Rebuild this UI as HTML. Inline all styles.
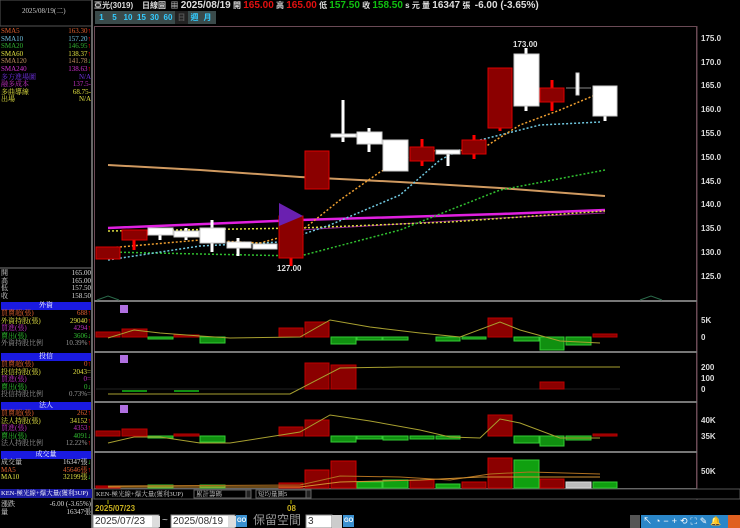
<!DOCTYPE html>
<html><head><meta charset="utf-8"><style>
*{margin:0;padding:0;box-sizing:border-box}
body{width:740px;height:528px;background:#000;overflow:hidden;font-family:"Liberation Sans","Noto Sans CJK TC",sans-serif;position:relative;color:#ddd}
.a{position:absolute;white-space:nowrap}
.s{font-size:7px;line-height:7.6px;font-family:"Liberation Serif","Noto Serif CJK SC",serif}
</style></head><body>
<svg width="740" height="528" style="position:absolute;left:0;top:0" font-family="Liberation Sans, Noto Sans CJK TC, sans-serif">
<!-- left panel borders -->
<rect x="0" y="0" width="92" height="26" fill="#000" stroke="#555"/>
<line x1="92" y1="0" x2="92" y2="528" stroke="#666" stroke-width="2"/>
<line x1="0" y1="268" x2="92" y2="268" stroke="#777"/>
<!-- chart frame -->
<rect x="94.5" y="26.5" width="602" height="462" fill="none" stroke="#6a4a55"/>
<line x1="697" y1="26" x2="697" y2="500" stroke="#6a4a55"/>
<g stroke="#777" stroke-width="2">
<line x1="94" y1="301" x2="697" y2="301"/><line x1="94" y1="352" x2="697" y2="352"/>
<line x1="94" y1="402" x2="697" y2="402"/><line x1="94" y1="452" x2="697" y2="452"/>
<line x1="94" y1="489" x2="697" y2="489"/>
</g>
<line x1="94" y1="499" x2="740" y2="499" stroke="#555"/>
<!-- price axis -->
<g fill="#ddd" font-size="8" font-weight="bold">
<text x="701" y="41">175.0</text><text x="701" y="65">170.0</text><text x="701" y="88">165.0</text><text x="701" y="112">160.0</text><text x="701" y="136">155.0</text><text x="701" y="160">150.0</text><text x="701" y="184">145.0</text><text x="701" y="207">140.0</text><text x="701" y="231">135.0</text><text x="701" y="255">130.0</text><text x="701" y="279">125.0</text>
<text x="701" y="323">5K</text><text x="701" y="340">0</text>
<text x="701" y="370">200</text><text x="701" y="381">100</text><text x="701" y="392">0</text>
<text x="701" y="423">40K</text><text x="701" y="439">35K</text>
<text x="701" y="474">50K</text><text x="701" y="498">10</text>
</g>
<!-- MA lines -->
<polyline points="108,165 200,170 300,177 400,182 500,188 605,196" fill="none" stroke="#d09a60" stroke-width="2"/>
<polyline points="108,228 300,220 500,214 605,210" fill="none" stroke="#e020e0" stroke-width="2.5"/>
<polyline points="300,230 500,218 605,213" fill="none" stroke="#902090" stroke-width="1"/>
<polyline points="108,231 300,228 450,222 605,211" fill="none" stroke="#e0e040" stroke-width="1.5" stroke-dasharray="2,2"/>
<polyline points="108,252 200,254 300,256 400,230 500,190 605,170" fill="none" stroke="#30c030" stroke-width="1.5" stroke-dasharray="2,2"/>
<polyline points="108,260 200,246 280,242 330,225 400,195 440,160 480,140 540,125 600,122" fill="none" stroke="#70c8e0" stroke-width="1.5" stroke-dasharray="2,2"/>
<polyline points="108,248 200,240 260,243 300,232 340,200 380,172 420,151 480,150 520,125 560,110 600,93" fill="none" stroke="#f0a030" stroke-width="1.5" stroke-dasharray="2,2"/>
<!-- candles -->
<g fill="#8b0000" stroke="#d00" stroke-width="1">
<rect x="96" y="247" width="24" height="12"/>
<line x1="134" y1="240" x2="134" y2="250" stroke="#f00" stroke-width="3"/><rect x="122" y="230" width="25" height="10"/>
<line x1="291" y1="258" x2="291" y2="266" stroke="#f00" stroke-width="3"/><rect x="279" y="216" width="24" height="42"/>
<rect x="305" y="151" width="24" height="38"/>
<line x1="422" y1="139" x2="422" y2="166" stroke="#f00" stroke-width="3"/><rect x="410" y="147" width="24" height="14"/>
<line x1="474" y1="135" x2="474" y2="159" stroke="#f00" stroke-width="3"/><rect x="462" y="140" width="24" height="14"/>
<line x1="500" y1="128" x2="500" y2="131" stroke="#f00" stroke-width="3"/><rect x="488" y="68" width="24" height="60"/>
<line x1="552" y1="80" x2="552" y2="111" stroke="#f00" stroke-width="3"/><rect x="540" y="88" width="24" height="14"/>
</g>
<polygon points="279,203 303,216 279,226" fill="#6a20b0"/>
<g fill="#fff" stroke="#ccc">
<line x1="160" y1="235" x2="160" y2="240" stroke="#fff" stroke-width="3"/><rect x="148" y="228" width="25" height="7"/>
<line x1="186" y1="228" x2="186" y2="240" stroke="#fff" stroke-width="3"/><rect x="174" y="231" width="25" height="6"/>
<line x1="212" y1="220" x2="212" y2="252" stroke="#fff" stroke-width="3"/><rect x="200" y="228" width="25" height="15"/>
<line x1="238" y1="238" x2="238" y2="256" stroke="#fff" stroke-width="3"/><rect x="227" y="242" width="24" height="6"/>
<rect x="253" y="244" width="24" height="5"/>
<line x1="343" y1="100" x2="343" y2="142" stroke="#fff" stroke-width="3"/><rect x="331" y="134" width="25" height="3"/>
<line x1="369" y1="128" x2="369" y2="152" stroke="#fff" stroke-width="3"/><rect x="357" y="132" width="25" height="12"/>
<rect x="383" y="140" width="25" height="31"/>
<line x1="448" y1="150" x2="448" y2="166" stroke="#fff" stroke-width="3"/><rect x="436" y="150" width="24" height="4"/>
<line x1="526" y1="48" x2="526" y2="111" stroke="#fff" stroke-width="3"/><rect x="514" y="54" width="25" height="52"/>
<line x1="566" y1="88" x2="591" y2="88" stroke="#888"/><rect x="576" y="73" width="3" height="22"/>
<line x1="605" y1="116" x2="605" y2="121" stroke="#fff" stroke-width="3"/><rect x="593" y="86" width="24" height="30"/>
</g>
<text x="277" y="271" fill="#ddd" font-size="8" font-weight="bold">127.00</text>
<text x="513" y="47" fill="#ddd" font-size="8" font-weight="bold">173.00</text>
<path d="M97,300 L108,296 L119,300 M640,300 L651,296 L662,300" fill="none" stroke="#2a6a4a"/>
<!-- 外資 -->
<g stroke-width="1">
<g fill="#8b0000" stroke="#b00"><rect x="96" y="332" width="24" height="5"/><rect x="122" y="329" width="25" height="8"/><rect x="174" y="335" width="25" height="2"/><rect x="279" y="328" width="24" height="9"/><rect x="305" y="322" width="24" height="15"/><rect x="488" y="318" width="24" height="19"/><rect x="593" y="334" width="24" height="3"/></g>
<g fill="#109010" stroke="#3c3"><rect x="148" y="337" width="25" height="2"/><rect x="200" y="337" width="25" height="6"/><rect x="331" y="337" width="25" height="7"/><rect x="357" y="337" width="25" height="3"/><rect x="383" y="337" width="25" height="3"/><rect x="436" y="337" width="24" height="4"/><rect x="462" y="337" width="24" height="2"/><rect x="514" y="337" width="25" height="4"/><rect x="540" y="337" width="24" height="13"/><rect x="566" y="337" width="25" height="8"/></g>
</g>
<polyline points="108,338 134,330 160,333 200,336 230,338 300,337 330,320 370,327 420,333 460,337 500,322 520,330 560,341 600,343" fill="none" stroke="#a8a030"/>
<!-- 投信 -->
<line x1="96" y1="389" x2="620" y2="389" stroke="#222"/>
<g fill="#109010"><rect x="122" y="390" width="25" height="2"/><rect x="174" y="390" width="25" height="2"/></g>
<g fill="#8b0000" stroke="#b00"><rect x="305" y="363" width="24" height="26"/><rect x="331" y="365" width="25" height="24"/><rect x="540" y="382" width="24" height="7"/></g>
<polyline points="108,394 290,394 340,368 400,367 620,367" fill="none" stroke="#a8a030"/>
<!-- 法人 -->
<g fill="#8b0000" stroke="#b00"><rect x="96" y="431" width="24" height="5"/><rect x="122" y="429" width="25" height="7"/><rect x="174" y="434" width="25" height="2"/><rect x="279" y="427" width="24" height="9"/><rect x="305" y="420" width="24" height="16"/><rect x="488" y="415" width="24" height="21"/><rect x="593" y="434" width="24" height="2"/></g>
<g fill="#109010" stroke="#3c3"><rect x="148" y="436" width="25" height="2"/><rect x="200" y="436" width="25" height="6"/><rect x="331" y="436" width="25" height="6"/><rect x="357" y="436" width="25" height="3"/><rect x="383" y="436" width="25" height="4"/><rect x="410" y="436" width="24" height="3"/><rect x="436" y="436" width="24" height="3"/><rect x="514" y="436" width="25" height="7"/><rect x="540" y="436" width="24" height="10"/><rect x="566" y="436" width="25" height="4"/></g>
<polyline points="108,443 134,437 160,437 200,443 230,443 300,432 330,415 370,421 420,430 450,437 480,438 500,419 520,423 560,438 600,438" fill="none" stroke="#a8a030"/>
<!-- 成交量 -->
<g fill="#8b0000" stroke="#c00"><rect x="96" y="486" width="24" height="2"/><rect x="279" y="483" width="24" height="5"/><rect x="305" y="470" width="24" height="18"/><rect x="331" y="461" width="25" height="27"/><rect x="410" y="480" width="24" height="8"/><rect x="462" y="482" width="24" height="6"/><rect x="488" y="458" width="24" height="30"/><rect x="540" y="479" width="24" height="9"/></g>
<g fill="#10a010" stroke="#3c3"><rect x="148" y="485" width="25" height="3"/><rect x="200" y="485" width="25" height="3"/><rect x="357" y="482" width="25" height="6"/><rect x="383" y="480" width="25" height="8"/><rect x="436" y="484" width="24" height="4"/><rect x="514" y="460" width="25" height="28"/><rect x="593" y="482" width="24" height="6"/></g>
<rect x="566" y="482" width="25" height="6" fill="#bbb" stroke="#ddd"/>
<polyline points="108,486 300,485 340,476 400,477 450,480 490,474 530,472 600,474" fill="none" stroke="#b07020"/>
<polyline points="108,487 300,487 340,482 420,480 480,477 600,477" fill="none" stroke="#d09030"/>
<!-- purple icons -->
<g fill="#b070e0"><rect x="120" y="305" width="8" height="8"/><rect x="120" y="355" width="8" height="8"/><rect x="120" y="405" width="8" height="8"/></g>
<!-- bottom bar -->
<rect x="0" y="489" width="92" height="9" fill="#1a1aa0"/>
<rect x="94" y="489" width="646" height="10" fill="#000" stroke="#555"/>
<rect x="194" y="490" width="52" height="8" fill="#000" stroke="#666"/><rect x="246" y="490" width="5" height="8" fill="#222" stroke="#666"/>
<rect x="256" y="490" width="50" height="8" fill="#000" stroke="#666"/><rect x="306" y="490" width="5" height="8" fill="#222" stroke="#666"/>
<line x1="108" y1="500" x2="108" y2="504" stroke="#aa0"/><line x1="291" y1="500" x2="291" y2="504" stroke="#aa0"/>
<text x="95" y="511" fill="#c8b020" font-size="8" font-weight="bold">2025/07/23</text>
<text x="287" y="511" fill="#c8b020" font-size="8" font-weight="bold">08</text>
<!-- controls -->
<rect x="93" y="515" width="66" height="13" fill="#fff" stroke="#888"/><rect x="152" y="516" width="8" height="11" fill="#ddd"/>
<rect x="171" y="515" width="64" height="13" fill="#fff" stroke="#888"/><rect x="228" y="516" width="8" height="11" fill="#ddd"/>
<rect x="236" y="515" width="11" height="12" fill="#3a90d0"/>
<rect x="306" y="515" width="26" height="13" fill="#fff" stroke="#888"/><rect x="332" y="515" width="10" height="13" fill="#ccc"/>
<rect x="343" y="515" width="11" height="12" fill="#3a90d0"/>
<rect x="630" y="515" width="10" height="13" fill="#555"/>
<rect x="641" y="515" width="99" height="13" fill="#2a86c8"/>
<rect x="728" y="515" width="12" height="13" fill="#e06020"/>
</svg>
<!-- top header -->
<div class="a s" style="left:22px;top:8px;color:#ccc">2025/08/19(二)</div>
<div class="a" style="left:94px;top:0;font-size:8px;line-height:11px;color:#ddd;font-weight:bold">亞光(3019) &nbsp;&nbsp; 日線圖 &nbsp;▦ <span style="font-size:10px">2025/08/19</span> 開 <span style="color:#e01010;font-size:10px">165.00</span> 高 <span style="color:#e01010;font-size:10px">165.00</span> 低 <span style="color:#10c010;font-size:10px">157.50</span> 收 <span style="color:#10c010;font-size:10px">158.50</span> s 元 量 <span style="font-size:10px">16347</span> 張 &nbsp;<span style="font-size:10px">-6.00 (-3.65%)</span></div>
<div class="a" style="left:95px;top:11px;height:13px;width:121px;background:#3a4a4a;font-size:8px;line-height:13px;color:#3cf;font-weight:bold;display:flex">
<span style="width:13px;text-align:center">1</span><span style="width:13px;text-align:center">5</span><span style="width:14px;text-align:center">10</span><span style="width:13px;text-align:center">15</span><span style="width:13px;text-align:center">30</span><span style="width:14px;text-align:center">60</span><span style="width:13px;text-align:center;background:#222;color:#555">日</span><span style="width:13px;text-align:center">週</span><span style="width:13px;text-align:center">月</span></div>
<!-- left indicator list -->
<div class="a s" style="left:1px;top:28px;width:90px">
<div style="display:flex;justify-content:space-between;color:#e06030"><span>SMA5</span><span>163.30<b style="color:#f00">↑</b></span></div>
<div style="display:flex;justify-content:space-between;color:#70c0e0"><span>SMA10</span><span>157.20<b style="color:#f00">↑</b></span></div>
<div style="display:flex;justify-content:space-between;color:#30b030"><span>SMA20</span><span>146.95<b style="color:#f00">↑</b></span></div>
<div style="display:flex;justify-content:space-between;color:#e0e040"><span>SMA60</span><span>138.37<b style="color:#f00">↑</b></span></div>
<div style="display:flex;justify-content:space-between;color:#c09060"><span>SMA120</span><span>141.78<b style="color:#3c3">↓</b></span></div>
<div style="display:flex;justify-content:space-between;color:#d030d0"><span>SMA240</span><span>138.63<b style="color:#f00">↑</b></span></div>
<div style="display:flex;justify-content:space-between;color:#7030e0"><span>多方進場圖</span><span>N/A</span></div>
<div style="display:flex;justify-content:space-between;color:#c030c0"><span>融多成本</span><span>137.5-</span></div>
<div style="display:flex;justify-content:space-between;color:#e0e040"><span>多曲導線</span><span>68.75-</span></div>
<div style="display:flex;justify-content:space-between;color:#e0e040"><span>出場</span><span>N/A</span></div>
</div>
<div class="a s" style="left:1px;top:270px;width:90px;color:#ddd">
<div style="display:flex;justify-content:space-between"><span>開</span><span>165.00</span></div>
<div style="display:flex;justify-content:space-between"><span>高</span><span>165.00</span></div>
<div style="display:flex;justify-content:space-between"><span>低</span><span>157.50</span></div>
<div style="display:flex;justify-content:space-between"><span>收</span><span>158.50</span></div>
</div>
<div class="a s" style="left:1px;top:302px;width:90px">
<div style="background:#1a1ae0;color:#fff;text-align:center;height:8px">外資</div>
<div style="display:flex;justify-content:space-between;color:#e06030"><span>買賣超(張)</span><span>688<b style="color:#f00">↑</b></span></div>
<div style="display:flex;justify-content:space-between;color:#e0e040"><span>外資持股(張)</span><span>29040<b style="color:#f00">↑</b></span></div>
<div style="display:flex;justify-content:space-between;color:#c030c0"><span>買進(張)</span><span>4294<b style="color:#f00">↑</b></span></div>
<div style="display:flex;justify-content:space-between;color:#30c030"><span>賣出(張)</span><span>3606<b style="color:#3c3">↓</b></span></div>
<div style="display:flex;justify-content:space-between;color:#999"><span>外資持股比例</span><span>10.39%<b style="color:#f00">↑</b></span></div>
</div>
<div class="a s" style="left:1px;top:353px;width:90px">
<div style="background:#1a1ae0;color:#fff;text-align:center;height:8px">投信</div>
<div style="display:flex;justify-content:space-between;color:#e06030"><span>買賣超(張)</span><span>0<b style="color:#f00">↑</b></span></div>
<div style="display:flex;justify-content:space-between;color:#e0e040"><span>投信持股(張)</span><span>2043=</span></div>
<div style="display:flex;justify-content:space-between;color:#c030c0"><span>買進(張)</span><span>0=</span></div>
<div style="display:flex;justify-content:space-between;color:#30c030"><span>賣出(張)</span><span>0<b style="color:#3c3">↓</b></span></div>
<div style="display:flex;justify-content:space-between;color:#999"><span>投信持股比例</span><span>0.73%=</span></div>
</div>
<div class="a s" style="left:1px;top:402px;width:90px">
<div style="background:#1a1ae0;color:#fff;text-align:center;height:8px">法人</div>
<div style="display:flex;justify-content:space-between;color:#e06030"><span>買賣超(張)</span><span>262<b style="color:#f00">↑</b></span></div>
<div style="display:flex;justify-content:space-between;color:#e0e040"><span>法人持股(張)</span><span>34152<b style="color:#f00">↑</b></span></div>
<div style="display:flex;justify-content:space-between;color:#c030c0"><span>買進(張)</span><span>4353<b style="color:#f00">↑</b></span></div>
<div style="display:flex;justify-content:space-between;color:#30c030"><span>賣出(張)</span><span>4091<b style="color:#3c3">↓</b></span></div>
<div style="display:flex;justify-content:space-between;color:#999"><span>法人持股比例</span><span>12.22%<b style="color:#f00">↑</b></span></div>
</div>
<div class="a s" style="left:1px;top:451px;width:90px">
<div style="background:#1a1ae0;color:#fff;text-align:center;height:8px">成交量</div>
<div style="display:flex;justify-content:space-between;color:#ddd"><span>成交量</span><span>16347張<b style="color:#3c3">↓</b></span></div>
<div style="display:flex;justify-content:space-between;color:#e06030"><span>MA5</span><span>45646張<b style="color:#f00">↑</b></span></div>
<div style="display:flex;justify-content:space-between;color:#e0e040"><span>MA10</span><span>32199張<b style="color:#3c3">↓</b></span></div>
</div>
<div class="a s" style="left:1px;top:490px;color:#fff;font-size:6.5px">KEN-極光線+爆大量(獲利3UP)</div>
<div class="a s" style="left:96px;top:491px;color:#ccc;font-size:6.5px">KEN-極光線+爆大量(獲利3UP)</div>
<div class="a s" style="left:196px;top:491px;color:#ccc;font-size:6.5px">累計籌碼</div>
<div class="a s" style="left:258px;top:491px;color:#ccc;font-size:6.5px">短均量圖5</div>
<div class="a s" style="left:1px;top:501px;width:90px;color:#ddd">
<div style="display:flex;justify-content:space-between"><span>漲跌</span><span>-6.00 (-3.65%)</span></div>
<div style="display:flex;justify-content:space-between"><span>量</span><span>16347張</span></div>
</div>
<div class="a" style="left:95px;top:516px;font-size:10px;line-height:12px;color:#333">2025/07/23</div>
<div class="a" style="left:162px;top:515px;font-size:10px;color:#ccc">~</div>
<div class="a" style="left:173px;top:516px;font-size:10px;line-height:12px;color:#333">2025/08/19</div>
<div class="a" style="left:237px;top:518px;font-size:6px;color:#fff;font-weight:bold">GO</div>
<div class="a" style="left:253px;top:513px;font-size:12px;line-height:15px;color:#999">保留空間</div>
<div class="a" style="left:308px;top:516px;font-size:10px;line-height:12px;color:#333">3</div>
<div class="a" style="left:344px;top:518px;font-size:6px;color:#fff;font-weight:bold">GO</div>
<div class="a" style="left:643px;top:515px;font-size:9px;line-height:13px;color:#fff;letter-spacing:3px">↖◔−+⟲⛶✎🔔</div>
</body></html>
